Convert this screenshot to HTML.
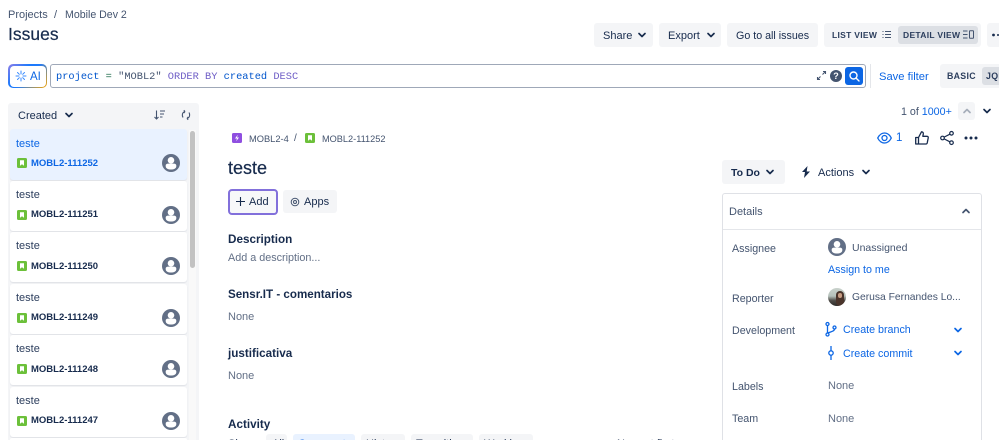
<!DOCTYPE html>
<html style="overflow:hidden"><head><meta charset="utf-8"><title>Issues</title>
<style>
html,body{margin:0;padding:0;background:#fff;height:440px;overflow:hidden}
body{width:999px;position:relative;font-family:"Liberation Sans",sans-serif;color:#172b4d;font-size:11px}
#w{position:absolute;left:0;top:0;width:999px;height:440px;overflow:hidden;filter:blur(.3px)}
.t{position:absolute;line-height:16px;height:16px;white-space:nowrap;margin-top:1px}
.b{position:absolute;background:#f4f5f7;border-radius:3px}
svg{position:absolute;overflow:visible}
.card{position:absolute;left:10px;width:177px;height:50px;background:#fff;border-radius:3px;box-shadow:0 1px 1px #dfe1e6}
.g{color:#44546f}.bl{color:#0c66e4}.s{font-weight:bold}
.m{font-family:"Liberation Mono",monospace;font-size:10.35px}
.id{font-size:9.5px}
.h{font-size:11.7px}
.v{font-size:8.5px;font-weight:bold;letter-spacing:.3px;color:#2c3e5d}
</style></head><body>
<svg width="0" height="0" style="position:absolute"><defs>
<symbol id="chev" viewBox="0 0 10 10"><path d="M2 3.5L5 6.5L8 3.5" fill="none" stroke="currentColor" stroke-width="1.7" stroke-linecap="round" stroke-linejoin="round"/></symbol>
<symbol id="av" viewBox="0 0 18 18"><circle cx="9" cy="9" r="9" fill="#626f86"/><circle cx="9" cy="6.3" r="3.3" fill="#fff"/><path d="M3.7 11.5c0-1.3 1.2-1.9 2.5-1.9h5.6c1.3 0 2.5.6 2.5 1.9v.7c0 2.3-2.5 3.3-5.3 3.3s-5.3-1-5.3-3.3z" fill="#fff"/></symbol>
<symbol id="st" viewBox="0 0 10 10"><rect width="10" height="10" rx="1.5" fill="#6cc03a"/><path d="M3 2.3h4v5.4L5 6.3 3 7.7z" fill="#fff"/></symbol>
</defs></svg>
<div id="w">
<div class="t g" style="left:8px;top:6px">Projects</div>
<div class="t g" style="left:54px;top:6px">/</div>
<div class="t g" style="left:65px;top:6px;font-size:10.6px">Mobile Dev 2</div>
<div class="t" style="left:8px;top:25px;font-size:17.5px;-webkit-text-stroke:.2px #172b4d">Issues</div>

<div class="b" style="left:594px;top:23px;width:59px;height:24px"></div>
<div class="t" style="left:603px;top:27px">Share</div>
<svg style="left:637px;top:30px;color:#172b4d" width="10" height="10"><use href="#chev"/></svg>
<div class="b" style="left:659px;top:23px;width:62px;height:24px"></div>
<div class="t" style="left:668px;top:27px">Export</div>
<svg style="left:706px;top:30px;color:#172b4d" width="10" height="10"><use href="#chev"/></svg>
<div class="b" style="left:727px;top:23px;width:91px;height:24px"></div>
<div class="t" style="left:736px;top:27px;font-size:10.7px">Go to all issues</div>
<div class="b" style="left:824px;top:23px;width:157px;height:24px"></div>
<div class="t v" style="left:832px;top:26px">LIST VIEW</div>
<svg style="left:882px;top:30px" width="9" height="9" stroke="#44546f" fill="none"><path d="M3 1.500H9M3 4.500H9M3 7.500H9M.5 1.500H1.500M.5 4.500H1.500M.5 7.500H1.500"/></svg>
<div class="b" style="left:898px;top:26px;width:80px;height:18px;background:#dcdfe4"></div>
<div class="t v" style="left:903px;top:26px">DETAIL VIEW</div>
<svg style="left:963px;top:30px" width="11" height="9" stroke="#44546f" fill="none"><path d="M0 1H4.500M0 4.500H4.500M0 8H4.500"/><rect x="6.500" y=".7" width="4" height="7.500" rx=".5"/></svg>
<div class="b" style="left:987px;top:23px;width:12px;height:24px;border-radius:3px 0 0 3px"></div>
<svg style="left:992px;top:33px" width="7" height="4" fill="#172b4d"><circle cx="1.500" cy="2" r="1.400"/><circle cx="6" cy="2" r="1"/></svg>

<div style="position:absolute;left:8px;top:64px;width:39px;height:24px;border-radius:5px;background:linear-gradient(135deg,#8f7ee7 0%,#1d7afc 35%,#1d7afc 50%,#fca700 100%)"></div>
<div style="position:absolute;left:9.5px;top:65.5px;width:36px;height:21px;border-radius:4px;background:#fff"></div>
<svg style="left:16px;top:71px" width="10" height="10" stroke="#388bff" stroke-width="1" fill="none" stroke-linecap="round"><path d="M5 0V3M5 7V10M0 5H3M7 5H10M1.500 1.500L3.300 3.300M6.700 6.700L8.500 8.500M8.500 1.500L6.700 3.300M3.300 6.700L1.500 8.500"/></svg>
<div class="t" style="left:30px;top:68px;color:#0c66e4;font-size:11.5px">AI</div>

<div style="position:absolute;left:50px;top:64px;width:814px;height:22px;border:1px solid #9fa8b8;border-radius:3px;background:#fff"></div>
<div class="t m" style="left:56px;top:68px;white-space:pre"><span style="color:#0055cc">project</span> <span style="color:#216e4e">=</span> <span style="color:#44546f">"MOBL2"</span> <span style="color:#6e5dc6">ORDER BY</span> <span style="color:#0055cc">created</span> <span style="color:#6e5dc6">DESC</span></div>
<svg style="left:817px;top:71px" width="9" height="9" stroke="#44546f" fill="none" stroke-width="1.100"><path d="M5.500 3.500L8.500 .5M6 .5H8.500V3M3.500 5.500L.5 8.500M.5 6V8.500H3"/></svg>
<div style="position:absolute;left:830px;top:70px;width:12px;height:12px;border-radius:50%;background:#44546f;color:#fff;font-size:9px;font-weight:bold;line-height:12px;text-align:center">?</div>
<div class="b" style="left:845px;top:67px;width:18px;height:18px;background:#0c66e4"></div>
<svg style="left:849px;top:71px" width="10" height="10" stroke="#fff" fill="none" stroke-width="1.400"><circle cx="4.500" cy="4.500" r="3.500"/><path d="M7 7L10 10" stroke-linecap="round"/></svg>
<div style="position:absolute;left:870px;top:64px;width:1px;height:24px;background:#e4e6ea"></div>
<div class="t bl" style="left:879px;top:68px;font-size:11.2px">Save filter</div>
<div class="b" style="left:940px;top:64px;width:59px;height:24px;border-radius:3px 0 0 3px"></div>
<div class="b" style="left:982px;top:67px;width:17px;height:18px;background:#dcdfe4;border-radius:3px 0 0 3px"></div>
<div class="t v" style="left:947px;top:67px;font-size:8.8px">BASIC</div>
<div style="position:absolute;left:982px;top:64px;width:17px;height:24px;overflow:hidden"><div class="t v" style="left:4px;top:3px;font-size:8.8px">JQL</div></div>

<div class="t g" style="left:901px;top:103px;font-size:10.7px">1 of <span class="bl">1000+</span></div>
<div class="b" style="left:958px;top:102px;width:17px;height:18px"></div>
<svg style="left:962px;top:106px;color:#a5adba;transform:rotate(180deg)" width="10" height="10"><use href="#chev"/></svg>
<svg style="left:982px;top:106px;color:#172b4d" width="10" height="10"><use href="#chev"/></svg>

<svg style="left:877px;top:132px" width="15" height="12" fill="none" stroke="#0c66e4" stroke-width="1.300"><path d="M.7 6C2.500 2.500 4.800 1 7.500 1s5 1.500 6.800 5c-1.800 3.500-4.100 5-6.800 5S2.500 9.500.7 6z"/><circle cx="7.500" cy="6" r="2.500"/></svg>
<div class="t bl" style="left:896px;top:129px;font-size:11.500px">1</div>
<svg style="left:915px;top:131px" width="14" height="14" fill="none" stroke="#172b4d" stroke-width="1.300" stroke-linejoin="round"><path d="M.7 6.500H3.500V13H.7zM3.500 6.500L6.500 .8C7.800.8 8.500 1.800 8.300 3L7.800 5.300H12C13 5.300 13.400 6 13.200 7L12.200 12C12 12.700 11.600 13 11 13H3.500"/></svg>
<svg style="left:940px;top:131px" width="14" height="14" fill="none" stroke="#172b4d" stroke-width="1.200"><circle cx="2.500" cy="7" r="1.800"/><circle cx="11.500" cy="2.300" r="1.800"/><circle cx="11.500" cy="11.700" r="1.800"/><path d="M4.100 6.100L9.900 3.200M4.100 7.900L9.900 10.800"/></svg>
<svg style="left:964px;top:136px" width="14" height="4" fill="#172b4d"><circle cx="2" cy="2" r="1.500"/><circle cx="7" cy="2" r="1.500"/><circle cx="12" cy="2" r="1.500"/></svg>

<div class="b" style="left:8px;top:103px;width:191px;height:337px;border-radius:3px 3px 0 0"></div>
<div class="t" style="left:18px;top:107px">Created</div>
<svg style="left:64px;top:110px;color:#172b4d" width="10" height="10"><use href="#chev"/></svg>
<svg style="left:154px;top:110px" width="11" height="10" fill="none" stroke="#44546f" stroke-width="1.100"><path d="M2.500 .5V9M.5 7L2.500 9L4.500 7M6 1H11M6 4H10M6 7H8.500"/></svg>
<svg style="left:181px;top:110px" width="10" height="10" fill="none" stroke="#44546f" stroke-width="1.100"><path d="M2 7.500C.8 5.500 1 2.500 4 1.500M4 1.500L2.800 .3M4 1.500L2.800 3M8 2.500C9.200 4.500 9 7.500 6 8.500M6 8.500L7.200 7M6 8.500L7.200 9.700"/></svg>
<div style="position:absolute;left:189px;top:130px;width:7px;height:310px;background:#f9f9f9"></div>
<div style="position:absolute;left:190px;top:131px;width:5px;height:137px;background:#c2c2c2;border-radius:3px"></div>

<div class="card" style="top:129px;height:51px;background:#e9f2ff"></div>
<div class="t bl" style="left:16px;top:135px">teste</div>
<svg style="left:17px;top:158px" width="10" height="10"><use href="#st"/></svg>
<div class="t s bl id" style="left:31px;top:155px">MOBL2-111252</div>
<svg style="left:162px;top:154px" width="18" height="18"><use href="#av"/></svg>

<div class="card" style="top:181px"></div>
<div class="t" style="left:16px;top:186px;color:#2c3e5d">teste</div>
<svg style="left:17px;top:210px" width="10" height="10"><use href="#st"/></svg>
<div class="t s id" style="left:31px;top:206px">MOBL2-111251</div>
<svg style="left:162px;top:206px" width="18" height="18"><use href="#av"/></svg>

<div class="card" style="top:232px"></div>
<div class="t" style="left:16px;top:237px;color:#2c3e5d">teste</div>
<svg style="left:17px;top:261px" width="10" height="10"><use href="#st"/></svg>
<div class="t s id" style="left:31px;top:258px">MOBL2-111250</div>
<svg style="left:162px;top:257px" width="18" height="18"><use href="#av"/></svg>

<div class="card" style="top:284px"></div>
<div class="t" style="left:16px;top:289px;color:#2c3e5d">teste</div>
<svg style="left:17px;top:313px" width="10" height="10"><use href="#st"/></svg>
<div class="t s id" style="left:31px;top:309px">MOBL2-111249</div>
<svg style="left:162px;top:309px" width="18" height="18"><use href="#av"/></svg>

<div class="card" style="top:335px"></div>
<div class="t" style="left:16px;top:340px;color:#2c3e5d">teste</div>
<svg style="left:17px;top:364px" width="10" height="10"><use href="#st"/></svg>
<div class="t s id" style="left:31px;top:361px">MOBL2-111248</div>
<svg style="left:162px;top:360px" width="18" height="18"><use href="#av"/></svg>

<div class="card" style="top:387px"></div>
<div class="t" style="left:16px;top:392px;color:#2c3e5d">teste</div>
<svg style="left:17px;top:416px" width="10" height="10"><use href="#st"/></svg>
<div class="t s id" style="left:31px;top:412px">MOBL2-111247</div>
<svg style="left:162px;top:412px" width="18" height="18"><use href="#av"/></svg>
<div class="card" style="top:438px;height:2px;box-shadow:none;border-radius:3px 3px 0 0"></div>

<svg style="left:232px;top:133px" width="10" height="10"><rect width="10" height="10" rx="1.500" fill="#8f4fe0"/><path d="M5.800 1.800L3 5.500H5L4.200 8.200L7 4.500H5z" fill="#fff"/></svg>
<div class="t g" style="left:249px;top:130px;font-size:9.3px">MOBL2-4</div>
<div class="t g" style="left:294px;top:130px;font-size:10px">/</div>
<svg style="left:305px;top:133px" width="10" height="10"><use href="#st"/></svg>
<div class="t g" style="left:322px;top:130px;font-size:9.2px">MOBL2-111252</div>
<div class="t" style="left:228px;top:159px;font-size:18px;-webkit-text-stroke:.2px #172b4d">teste</div>

<div class="b" style="left:228px;top:189px;width:46px;height:22px;border:2px solid #8270db;border-radius:4px;background:#f7f8f9"></div>
<svg style="left:236px;top:197px" width="9" height="9" stroke="#172b4d" stroke-width="1.100"><path d="M4.500 0V9M0 4.500H9"/></svg>
<div class="t" style="left:249px;top:193px">Add</div>
<div class="b" style="left:283px;top:190px;width:54px;height:23px"></div>
<svg style="left:290px;top:197px" width="10" height="10" fill="none" stroke="#44546f" stroke-width="1"><circle cx="5" cy="5" r="3.800"/><circle cx="5" cy="5" r="1.500"/></svg>
<div class="t" style="left:304px;top:193px">Apps</div>

<div class="t s h" style="left:228px;top:231px">Description</div>
<div class="t" style="left:228px;top:249px;font-size:10.8px;color:#626f86">Add a description...</div>
<div class="t s" style="left:228px;top:286px;font-size:11.6px">Sensr.IT - comentarios</div>
<div class="t" style="left:228px;top:308px;color:#626f86">None</div>
<div class="t s h" style="left:228px;top:345px">justificativa</div>
<div class="t" style="left:228px;top:367px;color:#626f86">None</div>
<div class="t s h" style="left:228px;top:416px">Activity</div>

<div style="position:absolute;left:220px;top:434px;width:480px;height:6px;overflow:hidden">
<div class="t" style="left:8px;top:1px">Show:</div>
<div class="b" style="left:46px;top:0;width:21px;height:24px"></div>
<div class="t" style="left:52px;top:1px">All</div>
<div class="b" style="left:73px;top:0;width:62px;height:24px;background:#e9f2ff"></div>
<div class="t bl" style="left:78px;top:1px">Comments</div>
<div class="b" style="left:141px;top:0;width:44px;height:24px"></div>
<div class="t" style="left:146px;top:1px">History</div>
<div class="b" style="left:191px;top:0;width:62px;height:24px"></div>
<div class="t" style="left:196px;top:1px">Transitions</div>
<div class="b" style="left:259px;top:0;width:54px;height:24px"></div>
<div class="t" style="left:264px;top:1px">Worklog</div>
<div class="t" style="left:397px;top:1px">Newest first</div>
</div>

<div class="b" style="left:722px;top:160px;width:63px;height:24px"></div>
<div class="t s" style="left:731px;top:164px;font-size:10.5px">To Do</div>
<svg style="left:765px;top:167px;color:#172b4d" width="10" height="10"><use href="#chev"/></svg>
<svg style="left:801px;top:166px" width="10" height="12" fill="#172b4d"><path d="M6.500 0L1 6H4L3 12L9 5.500H5.700z"/></svg>
<div class="t" style="left:818px;top:164px">Actions</div>
<svg style="left:861px;top:167px;color:#172b4d" width="10" height="10"><use href="#chev"/></svg>

<div style="position:absolute;left:722px;top:193px;width:258px;height:246px;border:1px solid #dfe1e6;border-bottom:none;border-radius:3px 3px 0 0;background:#fff"></div>
<div style="position:absolute;left:723px;top:229px;width:258px;height:1px;background:#e4e6ea"></div>
<div class="t g" style="left:729px;top:203px">Details</div>
<svg style="left:961px;top:206px;color:#44546f;transform:rotate(180deg)" width="10" height="10"><use href="#chev"/></svg>

<div class="t g" style="left:732px;top:240px;font-size:10.7px">Assignee</div>
<svg style="left:828px;top:238px" width="18" height="18"><use href="#av"/></svg>
<div class="t g" style="left:852px;top:239px;font-size:10.5px">Unassigned</div>
<div class="t bl" style="left:828px;top:261px;font-size:10.7px">Assign to me</div>

<div class="t g" style="left:732px;top:290px;font-size:10.7px">Reporter</div>
<div style="position:absolute;left:828px;top:288px;width:18px;height:18px;border-radius:50%;overflow:hidden;background:linear-gradient(180deg,#c9d2cc 0%,#b6c2bc 45%,#4d4a46 70%,#2e2a28 100%)"><div style="position:absolute;left:8px;top:3px;width:8px;height:15px;border-radius:4px;background:#4a342b"></div><div style="position:absolute;left:10px;top:5px;width:4px;height:5px;border-radius:2px;background:#c89e84"></div></div>
<div class="t g" style="left:852px;top:289px;font-size:10.3px">Gerusa Fernandes Lo...</div>

<div class="t g" style="left:732px;top:322px;font-size:10.7px">Development</div>
<svg style="left:825px;top:322px" width="12" height="15" fill="none" stroke="#0c66e4" stroke-width="1.300"><circle cx="2.500" cy="2" r="1.500"/><circle cx="2.500" cy="12.500" r="1.500"/><circle cx="9.500" cy="5.500" r="1.500"/><path d="M2.500 3.500V11M9.500 7C9.500 9 7 9.500 2.500 11"/></svg>
<div class="t bl" style="left:843px;top:321px;font-size:10.7px">Create branch</div>
<svg style="left:953px;top:325px;color:#0c66e4" width="10" height="10"><use href="#chev"/></svg>
<svg style="left:828px;top:346px" width="6" height="14" fill="none" stroke="#0c66e4" stroke-width="1.300"><circle cx="3" cy="7" r="2.200"/><path d="M3 0V4.800M3 9.200V14"/></svg>
<div class="t bl" style="left:843px;top:345px;font-size:10.7px">Create commit</div>
<svg style="left:953px;top:348px;color:#0c66e4" width="10" height="10"><use href="#chev"/></svg>

<div class="t g" style="left:732px;top:378px;font-size:10.7px">Labels</div>
<div class="t" style="left:828px;top:377px;color:#626f86">None</div>
<div class="t g" style="left:732px;top:410px;font-size:10.7px">Team</div>
<div class="t" style="left:828px;top:410px;color:#626f86">None</div>
</div>
</body></html>
